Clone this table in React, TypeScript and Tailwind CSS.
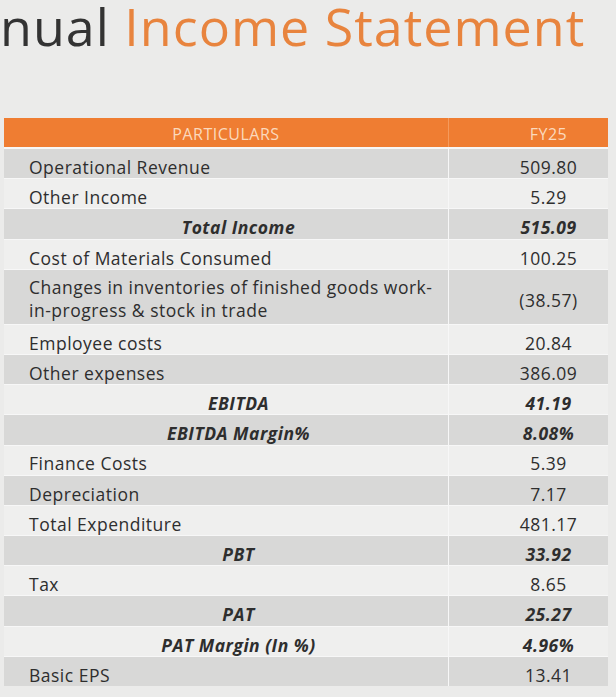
type Row = {
	label: string;
	value: string;
	total?: boolean;
	lines?: string[];
};

const rows: Row[] = [
	{ label: "Operational Revenue", value: "509.80" },
	{ label: "Other Income", value: "5.29" },
	{ label: "Total Income", value: "515.09", total: true },
	{ label: "Cost of Materials Consumed", value: "100.25" },
	{
		label: "Changes in inventories",
		value: "(38.57)",
		lines: [
			"Changes in inventories of finished goods work-",
			"in-progress & stock in trade",
		],
	},
	{ label: "Employee costs", value: "20.84" },
	{ label: "Other expenses", value: "386.09" },
	{ label: "EBITDA", value: "41.19", total: true },
	{ label: "EBITDA Margin%", value: "8.08%", total: true },
	{ label: "Finance Costs", value: "5.39" },
	{ label: "Depreciation", value: "7.17" },
	{ label: "Total Expenditure", value: "481.17" },
	{ label: "PBT", value: "33.92", total: true },
	{ label: "Tax", value: "8.65" },
	{ label: "PAT", value: "25.27", total: true },
	{ label: "PAT Margin (In %)", value: "4.96%", total: true },
	{ label: "Basic EPS", value: "13.41" },
];

export default function App() {
	return (
		<div className="w-[616px] h-[697px] overflow-hidden bg-[#ebebea] font-['Open_Sans',sans-serif] text-[#2e2e2e]">
			{/* titel */}
			<div className="h-[118px] flex flex-col">
				<h1 className="text-[52px] leading-[52px] tracking-[1px] whitespace-nowrap">
					<span className="text-[#333333]">nual </span>
					<span className="text-[#e8843e]">Income Statement</span>
				</h1>
			</div>

			<div className="ml-[4px] w-[604px] flex flex-col bg-[#f7f7f7]">
				<div className="flex h-[29px] mb-[2px] bg-[#ef7d32] text-[#fbd9bd] text-[16px] tracking-[0.5px]">
					<div className="w-[444px] flex items-center justify-center pt-[2px]">
						PARTICULARS
					</div>
					<div className="w-[1px] bg-[#f59a5c]" />
					<div className="flex-1 flex items-center justify-center pl-[40px] pt-[2px]">
						FY25
					</div>
				</div>

				<div className="flex flex-col gap-[1px]">
					{rows.map((row, i) => (
						<div
							key={row.label}
							className={
								"flex text-[17.5px] tracking-[0.5px] " +
								(row.lines ? "h-[54px] " : "h-[29.2px] ") +
								(i % 2 === 0 ? "bg-[#d8d8d7]" : "bg-[#efefee]")
							}
						>
							<div
								className={
									"w-[444px] flex items-center pl-[25px] pt-[7px] " +
									(row.total ? "justify-center font-bold italic" : "")
								}
							>
								{row.lines ? (
									<div className="leading-[23px] -mt-[3px] whitespace-nowrap">
										{row.lines.map((l) => (
											<div key={l}>{l}</div>
										))}
									</div>
								) : (
									<span>{row.label}</span>
								)}
							</div>
							<div className="w-[1px] bg-[#f7f7f7]" />
							<div
								className={
									"flex-1 flex items-center justify-center pl-[40px] pt-[7px] " +
									(row.total ? "font-bold italic" : "")
								}
							>
								{row.value}
							</div>
						</div>
					))}
				</div>
			</div>
		</div>
	);
}
